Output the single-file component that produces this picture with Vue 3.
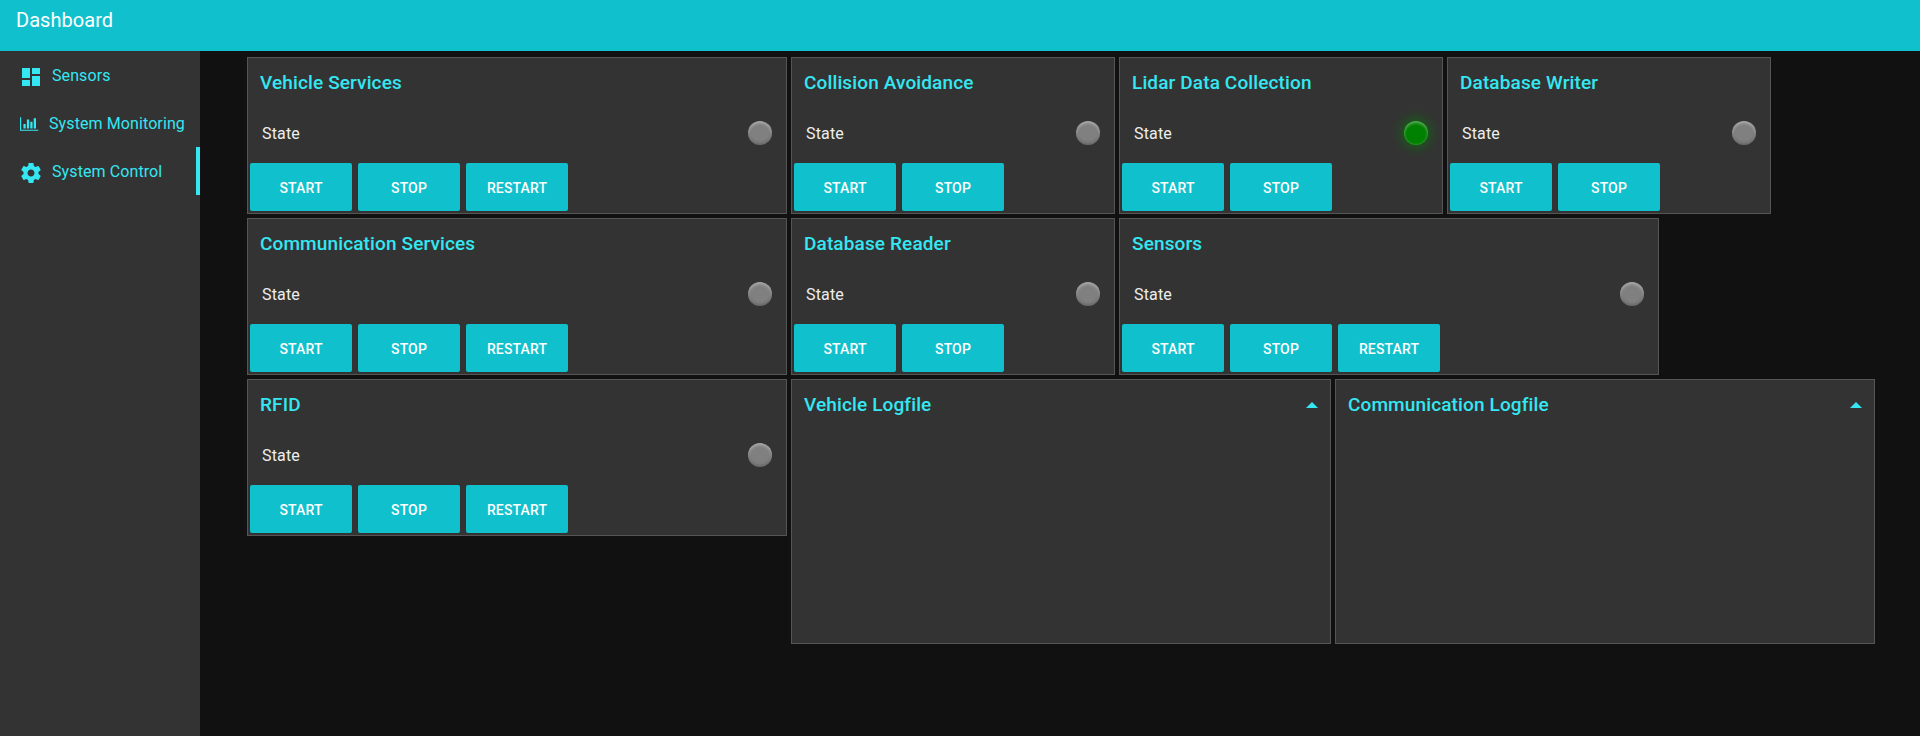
<script setup>
const sss = ['START', 'STOP', 'RESTART']
const ss = ['START', 'STOP']
const rows = [
  [
    { title: 'Vehicle Services', wide: true, actions: sss },
    { title: 'Collision Avoidance', actions: ss },
    { title: 'Lidar Data Collection', actions: ss, on: true },
    { title: 'Database Writer', actions: ss }
  ],
  [
    { title: 'Communication Services', wide: true, actions: sss },
    { title: 'Database Reader', actions: ss },
    { title: 'Sensors', wide: true, actions: sss }
  ],
  [
    { title: 'RFID', wide: true, actions: sss },
    { title: 'Vehicle Logfile', wide: true, log: true },
    { title: 'Communication Logfile', wide: true, log: true }
  ]
]
</script>

<template>
  <div class="page">
    <header class="toolbar"><h1>Dashboard</h1></header>
    <div class="body">
      <nav class="sidebar">
        <a class="item">
          <svg class="icon" width="24" height="24" viewBox="0 0 24 24"><path d="M3 13h8V3H3v10zm0 8h8v-6H3v6zm10 0h8V11h-8v10zm0-18v6h8V3h-8z" /></svg>
          <span>Sensors</span>
        </a>
        <a class="item">
          <svg class="chart" width="19" height="16" viewBox="0 0 2128 1792"><path d="M640 896v512H384V896h256zm384-512v1024H768V384h256zm1024 1152v128H0V128h128v1408h1920zm-640-896v768h-256V640h256zm384-384v1152h-256V256h256z" /></svg>
          <span>System Monitoring</span>
        </a>
        <a class="item active">
          <svg class="icon" width="24" height="24" viewBox="0 0 24 24"><path d="M19.43 12.98c.04-.32.07-.64.07-.98s-.03-.66-.07-.98l2.11-1.65c.19-.15.24-.42.12-.64l-2-3.46c-.12-.22-.39-.3-.61-.22l-2.49 1c-.52-.4-1.08-.73-1.69-.98l-.38-2.65C14.46 2.18 14.25 2 14 2h-4c-.25 0-.46.18-.49.42l-.38 2.65c-.61.25-1.17.59-1.69.98l-2.49-1c-.23-.09-.49 0-.61.22l-2 3.46c-.13.22-.07.49.12.64l2.11 1.65c-.04.32-.07.65-.07.98s.03.66.07.98l-2.11 1.65c-.19.15-.24.42-.12.64l2 3.46c.12.22.39.3.61.22l2.49-1c.52.4 1.08.73 1.69.98l.38 2.65c.03.24.24.42.49.42h4c.25 0 .46-.18.49-.42l.38-2.65c.61-.25 1.17-.59 1.69-.98l2.49 1c.23.09.49 0 .61-.22l2-3.46c.12-.22.07-.49-.12-.64l-2.11-1.65zM12 15.5c-1.93 0-3.5-1.57-3.5-3.5s1.57-3.5 3.5-3.5 3.5 1.57 3.5 3.5-1.57 3.5-3.5 3.5z" /></svg>
          <span>System Control</span>
        </a>
      </nav>
      <main class="content">
        <div v-for="(row, i) in rows" :key="i" class="row">
          <section v-for="card in row" :key="card.title" class="card" :class="{ wide: card.wide, log: card.log }">
            <div class="head">
              <h2>{{ card.title }}</h2>
              <svg v-if="card.log" class="caret" width="12" height="6" viewBox="0 0 12 6"><path d="M0 6L6 0l6 6z" /></svg>
            </div>
            <template v-if="!card.log">
              <div class="state">
                <span>State</span>
                <i class="led" :class="{ on: card.on }"></i>
              </div>
              <div class="actions">
                <button v-for="a in card.actions" :key="a">{{ a }}</button>
              </div>
            </template>
          </section>
        </div>
      </main>
    </div>
  </div>
</template>

<style>
body { background: #111; }
</style>

<style scoped>
.page {
  height: 736px;
  display: flex;
  flex-direction: column;
  overflow: hidden;
  background: #111;
  font-family: Roboto, sans-serif;
  font-size: 16px;
  letter-spacing: 0.1px;
}
.toolbar {
  flex: none;
  height: 51px;
  background: #10c1cd;
  color: #fff;
}
h1 {
  margin: 0;
  padding: 0 0 0 16px;
  font-size: 20px;
  line-height: 40px;
  font-weight: 400;
  letter-spacing: 0.05px;
}
.body { flex: 1; display: flex; min-height: 0; }
.sidebar { width: 200px; flex: none; background: #333; }
.item {
  box-sizing: border-box;
  height: 48px;
  padding-left: 19px;
  display: flex;
  align-items: center;
  color: #34e7f2;
  white-space: nowrap;
}
.item svg, .caret { fill: #34e7f2; flex: none; }
.icon { margin: 3px 9px 0 0; }
.chart { margin: 1px 10px 0 1px; }
.active { border-right: 4px solid #34e7f2; }
.content {
  flex: 1;
  padding: 6px 0 0 47px;
  display: flex;
  flex-direction: column;
  gap: 4px;
}
.row { display: flex; align-items: flex-start; gap: 4px; }
.card {
  box-sizing: border-box;
  width: 324px;
  height: 157px;
  border: 1px solid #555;
  background: #333;
}
.wide { width: 540px; }
.log { height: 265px; }
.head {
  box-sizing: border-box;
  height: 51px;
  padding: 0 12px 1px;
  display: flex;
  align-items: center;
  justify-content: space-between;
  color: #34e7f2;
}
h2 { margin: 0; font-size: 19px; line-height: 24px; font-weight: 500; letter-spacing: 0.13px; }
.state {
  height: 48px;
  padding: 0 14px;
  display: flex;
  align-items: center;
  justify-content: space-between;
  color: #eee;
  letter-spacing: 0.16px;
}
.led {
  width: 24px;
  height: 24px;
  border-radius: 50%;
  background: gray;
  box-shadow: inset 0 2px 3px rgba(255, 255, 255, 0.35), inset 0 -2px 3px rgba(0, 0, 0, 0.2);
}
.led.on {
  background: green;
  box-shadow: 0 0 14px green, inset 0 2px 3px rgba(255, 255, 255, 0.35), inset 0 -1px 2px rgba(255, 255, 255, 0.15);
}
.actions { display: flex; gap: 6px; padding: 6px 2px 0; }
button {
  width: 102px;
  height: 48px;
  padding: 2px 0 0;
  border: 0;
  border-radius: 2px;
  background: #10c1cd;
  color: #fff;
  font: 500 14px Roboto, sans-serif;
  letter-spacing: 0.14px;
}
</style>
